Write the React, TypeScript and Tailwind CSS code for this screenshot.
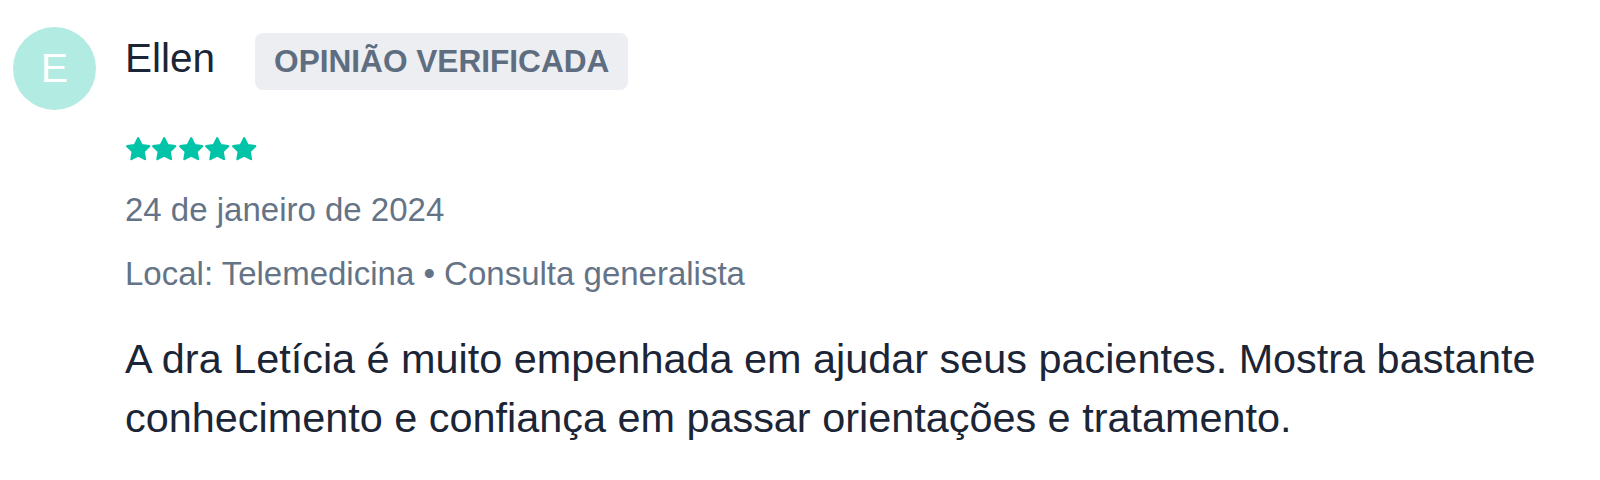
const font = { fontFamily: '"Liberation Sans", Arial, sans-serif' }

function StarIcon() {
  return (
    <svg width="26.4" height="26.4" viewBox="0 0 24 24" className="block">
      <polygon
        points="12,2 15.09,8.26 22,9.27 17,14.14 18.18,21.02 12,17.77 5.82,21.02 7,14.14 2,9.27 8.91,8.26"
        fill="#00c4a7"
        stroke="#00c4a7"
        strokeWidth="2"
        strokeLinejoin="round"
      />
    </svg>
  )
}

export default function App() {
  return (
    <div className="bg-white w-[1600px] h-[480px] pl-[13px] pt-[27px]" style={font}>
      <div className="flex gap-[29px]">
        <div className="w-[83px] h-[83px] shrink-0 rounded-full bg-[#b2ebe1] flex items-center justify-center text-white text-[41px] leading-none">
          E
        </div>
        <div className="flex-1 pr-[20px] pt-[6px]">
          <div className="flex items-center h-[57px] gap-[40px]">
            <span className="text-[40.5px] leading-none text-[#1b2536] mb-[7px]">Ellen</span>
            <span className="h-[57px] px-[19px] rounded-[8px] bg-[#eceef2] flex items-center text-[31.6px] leading-none font-bold text-[#5e6d80]">
              OPINIÃO VERIFICADA
            </span>
          </div>
          <div className="flex mt-[46px]">
            {[0, 1, 2, 3, 4].map((i) => (
              <StarIcon key={i} />
            ))}
          </div>
          <p className="mt-[28px] text-[33px] leading-[40px] text-[#657386]">24 de janeiro de 2024</p>
          <p className="mt-[24px] text-[33px] leading-[40px] text-[#657386]">
            Local: Telemedicina • Consulta generalista
          </p>
          <p className="mt-[36px] text-[41.4px] leading-[59px] text-[#1b2536]">
            A dra Letícia é muito empenhada em ajudar seus pacientes. Mostra bastante conhecimento e confiança em
            passar orientações e tratamento.
          </p>
        </div>
      </div>
    </div>
  )
}
